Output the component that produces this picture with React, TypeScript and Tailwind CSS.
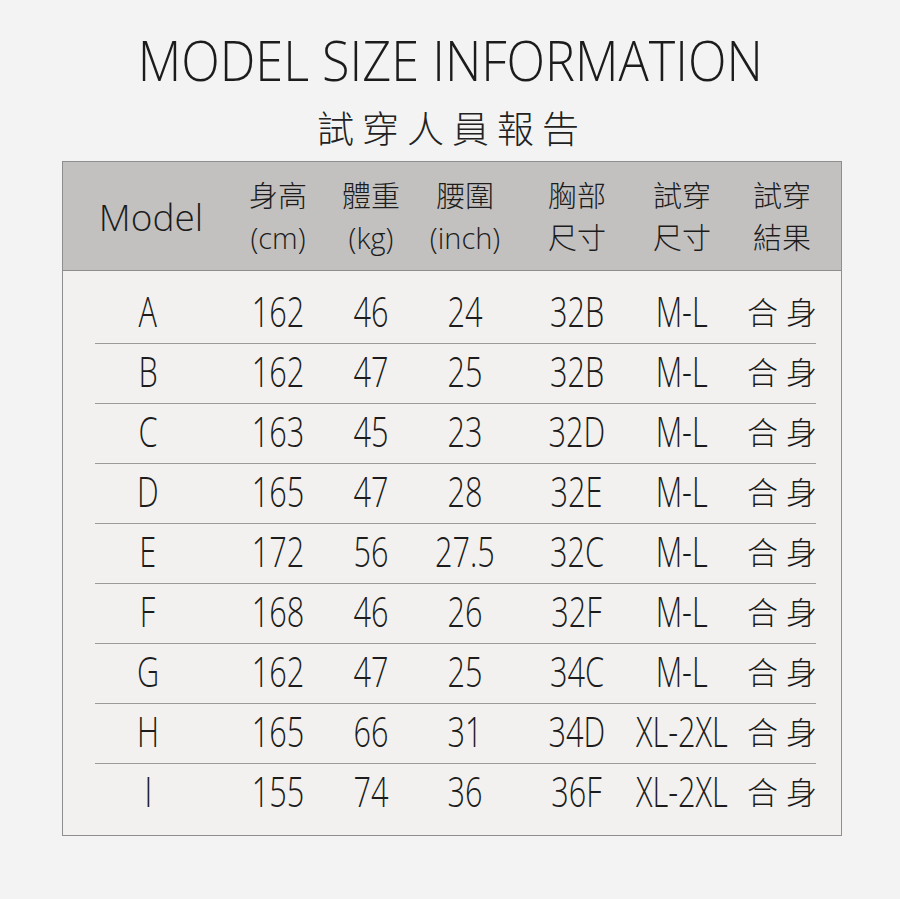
import React from "react";

const ROWS = [
  { model: "A", h: "162", w: "46", waist: "24", bust: "32B", size: "M-L" },
  { model: "B", h: "162", w: "47", waist: "25", bust: "32B", size: "M-L" },
  { model: "C", h: "163", w: "45", waist: "23", bust: "32D", size: "M-L" },
  { model: "D", h: "165", w: "47", waist: "28", bust: "32E", size: "M-L" },
  { model: "E", h: "172", w: "56", waist: "27.5", bust: "32C", size: "M-L" },
  { model: "F", h: "168", w: "46", waist: "26", bust: "32F", size: "M-L" },
  { model: "G", h: "162", w: "47", waist: "25", bust: "34C", size: "M-L" },
  { model: "H", h: "165", w: "66", waist: "31", bust: "34D", size: "XL-2XL" },
  { model: "I", h: "155", w: "74", waist: "36", bust: "36F", size: "XL-2XL" },
];

const GRID = "grid grid-cols-[156px_104px_82px_106px_118px_92px_108px] pl-[7px]";

function Num({ children }: { children: React.ReactNode }) {
  return (
    <div className="flex justify-center">
      <span className="inline-block whitespace-nowrap scale-x-[0.73] text-[42px]">{children}</span>
    </div>
  );
}

function HeadCell({ top, bottom }: { top: string; bottom: string }) {
  return (
    <div className="flex flex-col items-center whitespace-nowrap text-[29px] leading-[42px]">
      <span>{top}</span>
      <span>{bottom}</span>
    </div>
  );
}

export default function App() {
  return (
    <div className="min-h-[899px] w-[900px] bg-[#f3f3f3] font-['Open_Sans','Noto_Sans_CJK_TC',sans-serif] font-light text-[#1c1c1c]">
      <div className="flex justify-center pt-[27px]">
        <h1 className="inline-block whitespace-nowrap scale-x-[0.9] text-[56px] leading-[64px] font-light">
          MODEL SIZE INFORMATION
        </h1>
      </div>
      <div className="mt-[12px] flex justify-center">
        <h2 className="text-[37px] leading-[48px] tracking-[8px] pl-[4px] font-['Noto_Sans_CJK_TC',sans-serif] font-light text-[#222]">
          試穿人員報告
        </h2>
      </div>

      <div className="ml-[62px] mt-[10px] w-[780px] border border-[#8e8e8e] bg-[#f2f1ef]">
        {/* header */}
        <div className={`${GRID} bg-[#c3c1c0] border-b border-[#8e8e8e] pt-[13px] pb-[11px]`}>
          <div className="flex items-center justify-center pl-[6px] text-[37px]">Model</div>
          <HeadCell top="身高" bottom="(cm)" />
          <HeadCell top="體重" bottom="(kg)" />
          <HeadCell top="腰圍" bottom="(inch)" />
          <HeadCell top="胸部" bottom="尺寸" />
          <HeadCell top="試穿" bottom="尺寸" />
          <HeadCell top="試穿" bottom="結果" />
        </div>

        {/* body */}
        <div className="pt-[13px] pb-[12px]">
          {ROWS.map((r, i) => (
            <div key={r.model}>
              {i > 0 && <div className="ml-[32px] mr-[25px] h-px bg-[#9b9b9b]" />}
              <div className={`${GRID} h-[59px] items-start leading-[54px]`}>
                <Num>{r.model}</Num>
                <Num>{r.h}</Num>
                <Num>{r.w}</Num>
                <Num>{r.waist}</Num>
                <Num>{r.bust}</Num>
                <Num>{r.size}</Num>
                <div className="flex justify-center">
                  <span className="whitespace-nowrap text-[31px] tracking-[8px] pl-[8px] font-['Noto_Sans_CJK_TC',sans-serif] font-light">
                    合身
                  </span>
                </div>
              </div>
            </div>
          ))}
        </div>
      </div>
    </div>
  );
}
